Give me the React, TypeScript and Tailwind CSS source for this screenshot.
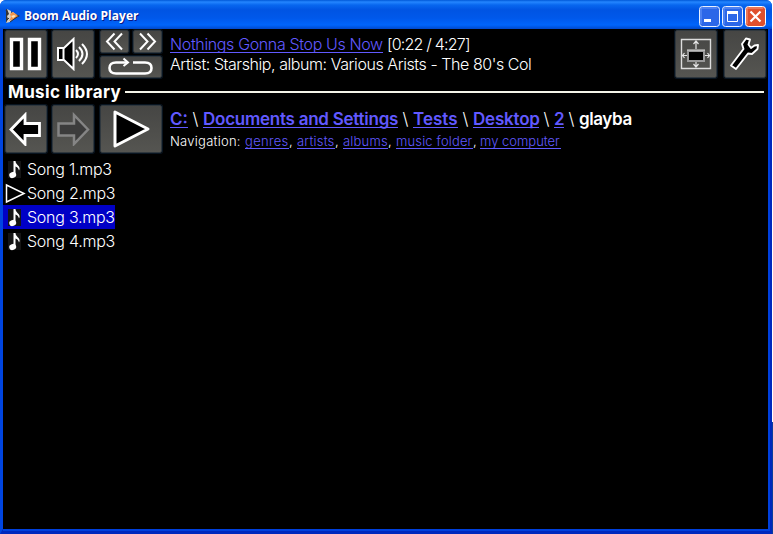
import type { ReactNode } from "react";

const ICON = "block shrink-0";

function Btn({ className, label, children }: { className: string; label: string; children: ReactNode }) {
  return (
    <button
      aria-label={label}
      className={`flex shrink-0 items-center justify-center rounded-[2px] border border-[#30383e] bg-linear-to-b from-[#464644] to-[#555551] shadow-[0_0_0_1px_#081420] ${className}`}
    >
      {children}
    </button>
  );
}

function Link({ className, children }: { className: string; children: ReactNode }) {
  return (
    <span className={`inline-block shrink-0 border-b border-[#6159ff] text-[#6159ff] ${className}`}>{children}</span>
  );
}

function Note() {
  return (
    <svg className={ICON} width="18" height="24" viewBox="0 0 18 24">
      <path d="M5 4h14v17H5z" fill="#151515" />
      <path d="M10.500 18V4h2c0 4 6 5 3.500 9.500-.500-2.500-2-3.500-3.500-4V18" fill="#fff" />
      <ellipse cx="9.700" cy="18" rx="3.500" ry="3" fill="#fff" transform="rotate(-20 9.700 18)" />
    </svg>
  );
}

function PlayMark() {
  return (
    <svg className={ICON} width="24" height="24" viewBox="0 0 24 24">
      <path d="M3.500 4v17L21 12.500z" fill="#000" stroke="#fff" strokeWidth="1.500" />
    </svg>
  );
}

function Song({ name, playing, selected }: { name: string; playing?: boolean; selected?: boolean }) {
  return (
    <div className={`flex h-6 w-[112px] items-center ${selected ? "bg-[#0000c6]" : ""}`}>
      <div className="flex w-6 shrink-0">{playing ? <PlayMark /> : <Note />}</div>
      <span className="text-base leading-6 font-light tracking-[-0.25px] whitespace-nowrap">{name}</span>
    </div>
  );
}

function TitleBar() {
  return (
    <header className="flex h-[29px] shrink-0 items-center rounded-t-[6px] bg-[linear-gradient(180deg,#0058d8_0,#2486ff_2px,#0867ef_5px,#0054e3_10px,#0058ea_18px,#0065fc_25px,#0048cb_29px)] pt-[3px] pr-[6px] pl-[5px]">
      <svg className={ICON} width="16" height="18" viewBox="0 0 16 18">
        <path d="M1 2l14 7-14 7z" fill="#333" />
        <path d="M2 2l4 2v2l2-1 4 3-7 7-4 1 2-4-1-3 2-2z" fill="#d4d0c8" />
        <path d="M5 7l3-2 5 4-4 3-5 2 2-4z" fill="#f2944a" />
        <path d="M6 9l3-1 2 1-3 2z" fill="#ffe5ba" />
        <path d="M1 3l2 4M1 14l3-3M5 15l7-5" fill="none" stroke="#333" />
      </svg>
      <h1 className="ml-[3px] grow font-['Open_Sans',sans-serif] text-[12px] leading-4 font-bold tracking-[0.06px] whitespace-nowrap text-white [text-shadow:1px_1px_0_#0a1883]">
        Boom Audio Player
      </h1>
      <div className="flex gap-[2px]">
        <svg className={ICON} width="21" height="21" viewBox="0 0 21 21">
          <rect x=".5" y=".5" width="20" height="20" rx="3" fill="#2c67e8" stroke="#e8efff" />
          <path d="M2 18V3q0-1 1-1h15" fill="none" stroke="#6d9cfa" />
          <path d="M5 13h7v3H5z" fill="#fff" />
        </svg>
        <svg className={ICON} width="21" height="21" viewBox="0 0 21 21">
          <rect x=".5" y=".5" width="20" height="20" rx="3" fill="#2c67e8" stroke="#e8efff" />
          <path d="M2 18V3q0-1 1-1h15" fill="none" stroke="#6d9cfa" />
          <path d="M5.500 6v9.500h10V6" fill="none" stroke="#fff" />
          <path d="M5 5h11v3H5z" fill="#fff" />
        </svg>
        <svg className={ICON} width="21" height="21" viewBox="0 0 21 21">
          <rect x=".5" y=".5" width="20" height="20" rx="3" fill="#e0502d" stroke="#fff" />
          <path d="M2 18V3q0-1 1-1h15" fill="none" stroke="#f49a7f" />
          <path d="M5.500 5.500l10 10M15.500 5.500l-10 10" stroke="#fff" strokeWidth="2.200" />
        </svg>
      </div>
    </header>
  );
}

function Transport() {
  return (
    <div className="flex h-[50px] shrink-0 pt-[1px] pr-[2px] pl-[2px]">
      <Btn className="h-[48px] w-[42px]" label="Pause">
        <svg className={ICON} width="34" height="34" viewBox="0 0 34 34">
          <path d="M2.500 2.500h10v29h-10zM20.500 2.500h10v29h-10z" fill="#000" stroke="#fff" strokeWidth="3.400" />
        </svg>
      </Btn>
      <Btn className="ml-[5px] h-[48px] w-[42px]" label="Volume">
        <svg className={ICON} width="34" height="34" viewBox="0 0 34 34">
          <path d="M2 11h6L17.500 2v30L8 23H2zM7.500 11v12" fill="#000" stroke="#fff" strokeWidth="2" />
          <path d="M20 13q4 4 0 8M23 10q7 7 0 14M26 7q10 10 0 20" fill="none" stroke="#fff" strokeWidth="2" />
        </svg>
      </Btn>
      <div className="ml-[6px] flex w-[62px] shrink-0 flex-col gap-[3px]">
        <div className="flex gap-[4px]">
          <Btn className="h-[23px] w-[29px]" label="Previous">
            <svg className={ICON} width="19" height="19" viewBox="0 0 19 19">
              <path d="M9.500 1.500L2 9.500l7.500 8M17 1.500L9.500 9.500l7.500 8" fill="none" stroke="#fff" strokeWidth="2" />
            </svg>
          </Btn>
          <Btn className="h-[23px] w-[29px]" label="Next">
            <svg className={ICON} width="19" height="19" viewBox="0 0 19 19">
              <path d="M2 1.500l7.500 8-7.500 8M9.500 1.500l7.500 8-7.500 8" fill="none" stroke="#fff" strokeWidth="2" />
            </svg>
          </Btn>
        </div>
        <Btn className="h-[22px] w-[62px]" label="Repeat">
          <svg className={ICON} width="48" height="20" viewBox="0 0 48 20">
            <path d="M26 5.500H38Q44.500 5.500 44.500 11T38 16.500H9Q2.500 16.500 2.500 11T9 5.500H20" fill="none" stroke="#fff" strokeWidth="2.600" />
            <path d="M16.500 1.500l4.500 4-4.500 3.500" fill="none" stroke="#fff" strokeWidth="2" />
          </svg>
        </Btn>
      </div>
      <div className="ml-[8px] grow pt-[4px] text-base leading-5 font-light whitespace-nowrap">
        <div className="flex h-5">
          <Link className="h-[19px] w-[213px] leading-5 tracking-[-0.36px]">Nothings Gonna Stop Us Now</Link>
          <span className="ml-1 tracking-[-0.8px]">[0:22 / 4:27]</span>
        </div>
        <div className="tracking-[-0.43px]">Artist: Starship, album: Various Arists - The 80's Col</div>
      </div>
      <Btn className="h-[48px] w-[42px]" label="Full screen">
        <svg className={ICON} width="34" height="34" viewBox="0 0 34 34">
          <path d="M2.500 2.500h29v29h-29z" fill="none" stroke="#ddd" strokeWidth="1.400" />
          <path d="M9 14h16v10H9z" fill="#000" stroke="#999" strokeWidth="2" />
          <path d="M8 13h18" stroke="#ddd" />
          <path d="M17 12V4M14.500 7L17 4l2.500 3M17 25v5M14.500 27l2.500 3 2.500-3M8 18.500H3M5.500 16l-2 2.500 2 2.500M26 18.500h5M28.500 16l2 2.500-2 2.500" fill="none" stroke="#e5e5e5" strokeWidth="1.200" />
        </svg>
      </Btn>
      <Btn className="ml-[7px] h-[48px] w-[42px]" label="Settings">
        <svg className={ICON} width="34" height="36" viewBox="0 0 34 36">
          <path d="M3 29.500L15.500 13 14 8l4-5.500 4 1-1.500 5L23 12l3.500-2.500 3.500-.5-.5 4-5.500 5-4-.500L8 33z" fill="#000" stroke="#fff" strokeWidth="1.900" strokeLinejoin="round" />
        </svg>
      </Btn>
    </div>
  );
}

function Browser() {
  return (
    <div className="flex h-[53px] shrink-0 pt-[2px] pl-[2px]">
      <Btn className="h-[48px] w-[42px]" label="Back">
        <svg className={ICON} width="34" height="34" viewBox="0 0 34 34">
          <path d="M2 17.500L16 3v8.500h14.500v12H16V32z" fill="#000" stroke="#fff" strokeWidth="2.800" />
        </svg>
      </Btn>
      <Btn className="ml-[5px] h-[48px] w-[42px]" label="Forward">
        <svg className={ICON} width="34" height="34" viewBox="0 0 34 34">
          <path d="M32 17.500L18 3v8.500H2.500v12H18V32z" fill="#3c3c3c" stroke="#858585" strokeWidth="2.500" />
        </svg>
      </Btn>
      <Btn className="ml-[6px] h-[48px] w-[62px]" label="Play">
        <svg className={ICON} width="40" height="40" viewBox="0 0 40 40">
          <path d="M4 3v34l33-17z" fill="#000" stroke="#fff" strokeWidth="3" strokeLinejoin="round" />
        </svg>
      </Btn>
      <div className="ml-[8px] pt-[3px] whitespace-nowrap">
        <div className="flex h-[23px] text-[17px] leading-[23px] font-semibold">
          <Link className="h-[20px] w-[18px]">C:</Link>
          <span className="w-[15px] text-center font-light">\</span>
          <Link className="h-[20px] w-[195px] tracking-[-0.25px]">Documents and Settings</Link>
          <span className="w-[15px] text-center font-light">\</span>
          <Link className="h-[20px] w-[45px]">Tests</Link>
          <span className="w-[15px] text-center font-light">\</span>
          <Link className="h-[20px] w-[66px] tracking-[-0.2px]">Desktop</Link>
          <span className="w-[15px] text-center font-light">\</span>
          <Link className="h-[20px] w-[10px]">2</Link>
          <span className="w-[15px] text-center font-light">\</span>
          <span className="tracking-[-0.4px]">glayba</span>
        </div>
        <div className="flex h-5 text-[13px] leading-5 font-light">
          <span className="w-[75px] tracking-[0.25px]">Navigation:</span>
          <Link className="h-[18px] w-[44px] tracking-[0.3px]">genres</Link>
          <span className="w-[8px]">,</span>
          <Link className="h-[18px] w-[38px] tracking-[0.2px]">artists</Link>
          <span className="w-[8px]">,</span>
          <Link className="h-[18px] w-[45px] tracking-[0.2px]">albums</Link>
          <span className="w-[8px]">,</span>
          <Link className="h-[18px] w-[77px] tracking-[0.15px]">music folder</Link>
          <span className="w-[7px]">,</span>
          <Link className="h-[18px] w-[81px]">my computer</Link>
        </div>
      </div>
    </div>
  );
}

export default function App() {
  return (
    <div className="flex h-[534px] w-[773px] overflow-hidden bg-white font-[Inter,'Liberation_Sans',sans-serif] text-white">
      <div className="flex h-[534px] w-[772px] shrink-0 flex-col rounded-t-[6px] bg-[#003bd8]">
        <TitleBar />
        <div className="flex grow border-t-0 border-r-4 border-b-[5px] border-l-[3px] border-[#0045e0] border-r-[#0028bd] border-b-[#0028bd]">
          <main className="flex w-[765px] flex-col bg-black shadow-[1px_1px_0_1px_#0040dd]">
            <Transport />
            <div className="flex h-[24px] items-center pt-px pr-[4px] pl-[5px]">
              <h2 className="w-[117px] text-[17px] leading-6 font-bold tracking-[0.35px] whitespace-nowrap">Music library</h2>
              <div className="h-[2px] grow bg-[#f4f4e8]" />
            </div>
            <Browser />
            <div className="pt-px">
              <Song name="Song 1.mp3" />
              <Song name="Song 2.mp3" playing />
              <Song name="Song 3.mp3" selected />
              <Song name="Song 4.mp3" />
            </div>
          </main>
        </div>
      </div>
      <div className="mt-[422px] w-px bg-[#0b3d9c]" />
    </div>
  );
}
